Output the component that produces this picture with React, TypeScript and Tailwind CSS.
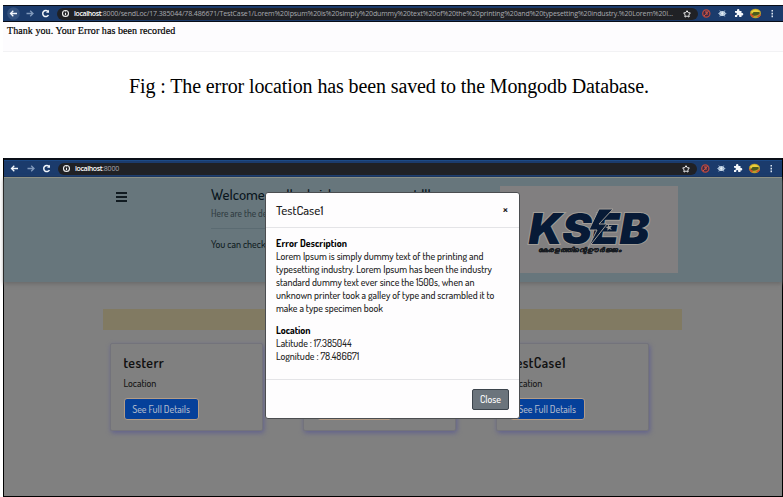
import { Star } from "lucide-react";

function ToolbarIcons() {
  return (
    <svg width="85" height="15" viewBox="0 0 85 15" className="shrink-0">
      <g transform="translate(1.5 0)">
        <circle cx="6.8" cy="7.5" r="3.6" fill="#3b2846" stroke="#b8483f" strokeWidth="1.3" />
        <path d="M4.5 10 9 5M5.5 6h2v3" stroke="#d85a45" strokeWidth="1" fill="none" />
        <ellipse cx="22.8" cy="7.5" rx="3.2" ry="2.6" fill="#c4d4e4" />
        <path d="M18.8 7.5h8M20.3 4.5l5 6M25.3 4.5l-5 6" stroke="#9fb6cf" strokeWidth="1" />
        <circle cx="22.8" cy="7.5" r="1.2" fill="#e8f0f8" />
        <path d="M35.5 5h2V4.3a1.2 1.2 0 0 1 2.4 0V5H42v2h.6a1.2 1.2 0 0 1 0 2.4H42V11h-2.3V9.9a1 1 0 0 0-2 0V11h-2.2V9h.8a1.1 1.1 0 0 0 0-2.2h-.8z" fill="#f4f7fb" />
        <ellipse cx="56" cy="7.5" rx="5.5" ry="4.8" fill="#b9a02c" />
        <path d="M51 6q5-5 10 0l-2 1h-6z" fill="#e9cf3a" />
        <path d="M52 9q4 2 8-1v-2h-6z" fill="#4b5a1d" />
        <path d="M51 8l3 3M58 11l3-2" stroke="#d9482c" strokeWidth="1.5" />
        <path d="M72 4h1.5v1.6H72zM72 6.8h1.5v1.6H72zM72 9.6h1.5v1.6H72z" fill="#dce6f2" />
      </g>
    </svg>
  );
}

function Toolbar({ path, active }: { path: string; active?: boolean }) {
  return (
    <div className="flex h-[15px] items-center bg-[#1b3b6c]">
      <svg width="54" height="15" viewBox="0 0 54 15" className="shrink-0" fill="none" strokeWidth="1.3">
        {active && <circle cx="10.5" cy="7.5" r="6.3" fill="#34527f" />}
        <path d="M14 7.5H7.5M10.3 4.8 7.5 7.5l2.8 2.7" stroke="#f3f7fc" />
        <path d="M23.5 7.5H30M27.2 4.8 30 7.5l-2.8 2.7" stroke="#8199bb" />
        <path d="M45 5.6A3 3 0 1 0 45.4 9" stroke="#f3f7fc" strokeWidth="1.5" />
        <path d="M46 3.8v3h-3z" fill="#f3f7fc" />
      </svg>
      <div className="flex h-3 min-w-0 flex-1 items-center rounded-full bg-[#202125] pr-[7px] pl-[4px]">
        <svg width="9" height="9" viewBox="0 0 9 9" className="shrink-0" fill="none" stroke="#f0f0f0">
          <circle cx="4.5" cy="4.5" r="3" strokeWidth="1.1" />
          <path d="M4.5 4v2.3M4.5 2.5v.8" strokeWidth="1.1" />
        </svg>
        <div className="ml-[4px] min-w-0 flex-1 font-['Open_Sans',sans-serif] text-[7px] leading-3 tracking-[-0.13px] whitespace-nowrap text-[#a9abb0]">
          <span className="font-semibold tracking-[-0.4px] text-white">localhost</span>
          <span>{path}</span>
        </div>
        <Star className="size-[8px] shrink-0 text-white" strokeWidth={3} />
      </div>
      <ToolbarIcons />
    </div>
  );
}

function ErrorCard({ title }: { title: string }) {
  return (
    <div className="flex h-[88px] w-[153px] flex-col items-start rounded-[2px] border border-[#73737b] bg-[#808080] pl-[12.5px] font-medium shadow-[1px_2px_5px_#62628d]">
      <h2 className="mt-[10px] text-[14px] leading-[18px] font-semibold tracking-[0.4px] text-[#101010]">{title}</h2>
      <p className="mt-[5px] text-[10px] leading-3 text-[#151515]">Location</p>
      <button className="mt-[9px] h-[22px] w-[75px] rounded-[3px] border border-[#b39c86] bg-[#05409a] text-[10px] leading-[19px] whitespace-nowrap text-[#aeb9cc]">
        See Full Details
      </button>
    </div>
  );
}

function KsebLogo() {
  return (
    <svg width="178" height="87" viewBox="0 0 178 87">
      <text
        x="28.5"
        y="58"
        textLength="121"
        lengthAdjust="spacingAndGlyphs"
        fontFamily="Inter, sans-serif"
        fontWeight="900"
        fontStyle="italic"
        fontSize="42"
        fill="#071a36"
        stroke="#a19d97"
        strokeWidth="2"
        paintOrder="stroke"
      >
        KSEB
      </text>
      <path d="M98 23 88 44h8l-9 18 19-24h-8l14-15z" fill="#071a36" stroke="#a19d97" strokeWidth="1" transform="translate(1 0)" />
      <path d="m108 38 1.5 2.2 2.6-.5-1.7 2 1.4 2.3-2.6-1-1.8 1.8.2-2.6-2.3-1.2 2.6-.5z" fill="#a19d97" />
      <text x="38" y="66" textLength="83" lengthAdjust="spacingAndGlyphs" fontFamily="Noto Sans, sans-serif" fontSize="6.5" fontWeight="700" fontStyle="italic" fill="#161a20" stroke="#161a20" strokeWidth="0.25">
        കേരളത്തിന്റെ ഊർജ്ജം
      </text>
    </svg>
  );
}

function Modal() {
  return (
    <div className="absolute top-[34px] left-[261px] flex h-[227px] w-[255px] flex-col rounded-[3px] border border-[#4b4d50] bg-[#fefdfe] text-[10px] leading-[13px] font-medium text-[#222]">
      <div className="flex h-[35px] items-center justify-between border-b border-[#e4e4e7] pr-[11px] pl-[10px]">
        <h2 className="text-[13px] text-[#202020]">TestCase1</h2>
        <span className="-mt-[2px] text-[13px] font-semibold">×</span>
      </div>
      <div className="flex-1 pt-[9px] pl-[10px] tracking-[-0.02px] whitespace-nowrap">
        <p className="font-bold tracking-[0.08px] text-black">Error Description</p>
        <p>Lorem Ipsum is simply dummy text of the printing and</p>
        <p>typesetting industry. Lorem Ipsum has been the industry</p>
        <p>standard dummy text ever since the 1500s, when an</p>
        <p>unknown printer took a galley of type and scrambled it to</p>
        <p>make a type specimen book</p>
        <p className="mt-[9px] font-bold text-black">Location</p>
        <p>Latitude : 17.385044</p>
        <p>Lognitude : 78.486671</p>
      </div>
      <div className="flex h-[39px] items-center justify-end border-t border-[#e4e4e7] pr-[10px]">
        <button className="h-[21px] w-[37px] rounded-[2px] border border-[#3c444c] bg-[#6b747c] text-[10px] leading-[18px] text-white">Close</button>
      </div>
    </div>
  );
}

export default function App() {
  return (
    <main className="h-[497px] w-[783px] overflow-hidden bg-white font-['Dosis','Lato',sans-serif]">
      <section className="mt-[5px] ml-[3px] h-[47px] border-b border-[#f2f2f4] bg-[#fdfcfe]">
        <div className="border-y border-[#080d18]">
          <Toolbar active path=":8000/sendLoc/17.385044/78.486671/TestCase1/Lorem%20Ipsum%20is%20simply%20dummy%20text%20of%20the%20printing%20and%20typesetting%20industry.%20Lorem%20I..." />
        </div>
        <p className="pt-[3px] pl-[4px] font-['Liberation_Serif',serif] text-[10px] leading-[11px] tracking-[0.07px] text-black [-webkit-text-stroke:0.2px_black]">Thank you. Your Error has been recorded</p>
      </section>
      <p className="mt-[22px] ml-[129px] font-['Liberation_Serif',serif] text-[20px] leading-6 tracking-[-0.115px] whitespace-nowrap text-black">
        Fig : The error location has been saved to the Mongodb Database.
      </p>
      <section className="relative mt-[60px] ml-[3px] h-[339px] border-x border-b border-black bg-[#808080]">
        <div className="h-[2px] bg-[#0a0f18]" />
        <div className="border-t border-b border-t-[#1d4a86] border-b-[#12305f]">
          <Toolbar path=":8000" />
        </div>
        <header className="flex h-[105px] border-t border-[#8b8f84] bg-[#67767c] shadow-[0_2px_4px_#6a6a6a]">
          <div className="ml-[112px] flex w-[11px] flex-col gap-[2px] pt-[14px]">
            <div className="h-[2px] bg-[#111b21]" />
            <div className="h-[2px] bg-[#111b21]" />
            <div className="h-[2px] bg-[#111b21]" />
          </div>
          <div className="ml-[84px] w-[277px] font-medium whitespace-nowrap">
            <h1 className="mt-[8px] text-[15px] leading-[18px] text-[#07141b]">Welcome mallankrishna vemuganat !!!</h1>
            <p className="mt-[3px] text-[9.5px] leading-3 text-[#303c42]">Here are the details</p>
            <hr className="mt-[9px] border-[#5b6b72]" />
            <p className="mt-[9px] text-[10px] leading-3 text-[#101c22]">You can check</p>
          </div>
          <div className="mt-[8px] ml-[12px] h-[87px] w-[178px] bg-[#817f80]">
            <KsebLogo />
          </div>
        </header>
        <div className="mt-[27px] ml-[99px] h-[21px] w-[579px] bg-[#817a62]" />
        <div className="mt-[13px] ml-[106px] flex gap-[40px]">
          <ErrorCard title="testerr" />
          <ErrorCard title="testerr" />
          <ErrorCard title="TestCase1" />
        </div>
        <Modal />
      </section>
    </main>
  );
}
